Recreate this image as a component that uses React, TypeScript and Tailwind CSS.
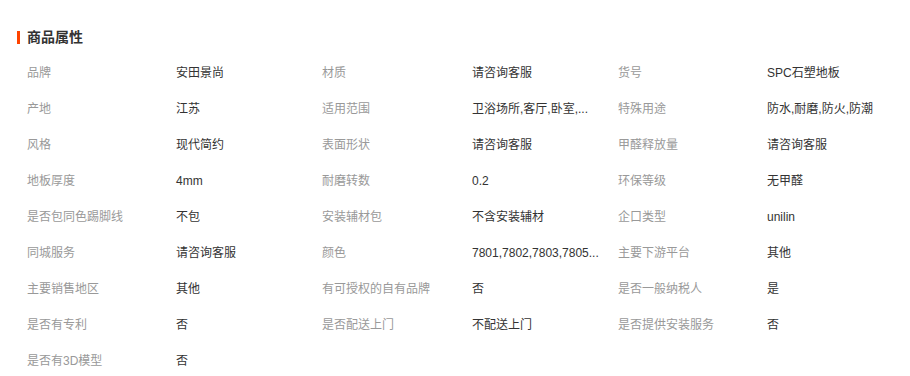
const rows: [string, string][][] = [
  [['品牌', '安田景尚'], ['材质', '请咨询客服'], ['货号', 'SPC石塑地板']],
  [['产地', '江苏'], ['适用范围', '卫浴场所,客厅,卧室,...'], ['特殊用途', '防水,耐磨,防火,防潮']],
  [['风格', '现代简约'], ['表面形状', '请咨询客服'], ['甲醛释放量', '请咨询客服']],
  [['地板厚度', '4mm'], ['耐磨转数', '0.2'], ['环保等级', '无甲醛']],
  [['是否包同色踢脚线', '不包'], ['安装辅材包', '不含安装辅材'], ['企口类型', 'unilin']],
  [['同城服务', '请咨询客服'], ['颜色', '7801,7802,7803,7805...'], ['主要下游平台', '其他']],
  [['主要销售地区', '其他'], ['有可授权的自有品牌', '否'], ['是否一般纳税人', '是']],
  [['是否有专利', '否'], ['是否配送上门', '不配送上门'], ['是否提供安装服务', '否']],
  [['是否有3D模型', '否']],
]

export default function App() {
  return (
    <div
      className="w-[910px] h-[376px] bg-white overflow-hidden pt-[27px]"
      style={{ fontFamily: '"Liberation Sans", "Noto Sans CJK SC", sans-serif' }}
    >
      <div className="flex items-center h-5 pl-[17px]">
        <span className="w-[3px] h-[13px] bg-[#ff4400] mr-[7px]" />
        <h3 className="text-[14px] font-bold text-[#333] leading-5">商品属性</h3>
      </div>

      <div className="mt-2 pl-[27px] grid grid-cols-[149px_146px_150px_146px_149px_1fr] text-[12px] leading-[36px]">
        {rows.map((row) =>
          row.map(([label, value]) => (
            <div key={label} className="contents">
              <div className="text-[#999] whitespace-nowrap">{label}</div>
              <div className="text-[#333] whitespace-nowrap">{value}</div>
            </div>
          ))
        )}
      </div>
    </div>
  )
}
